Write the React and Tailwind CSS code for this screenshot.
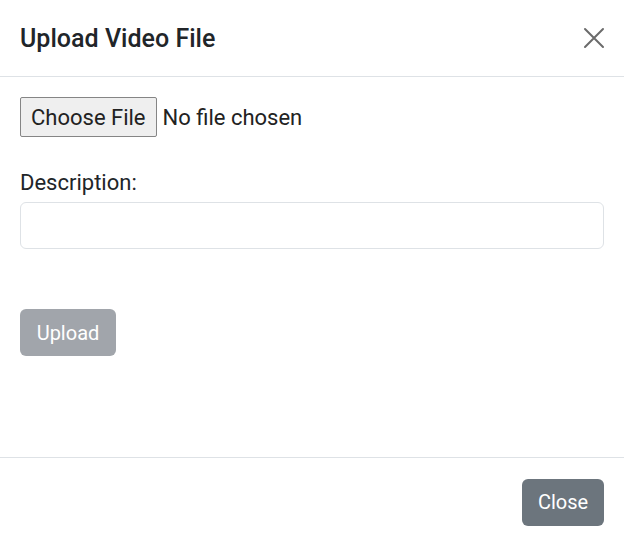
import React from "react";

function CloseIcon() {
  return (
    <svg width="22" height="22" viewBox="0 0 22 22" fill="none">
      <path d="M2 2 L20 20 M20 2 L2 20" stroke="#6b6b6b" strokeWidth="2" strokeLinecap="round" />
    </svg>
  );
}

export default function App() {
  return (
    <div
      className="w-[624px] h-[546px] bg-white flex flex-col text-[#212529]"
      style={{ fontFamily: "Roboto, 'Liberation Sans', sans-serif" }}
    >
      {/* header */}
      <div className="h-[77px] flex items-center justify-between px-5 border-b border-[#dee2e6]">
        <h5
          className="text-[25px] font-medium leading-none"
          style={{ fontFamily: "'Roboto Medium', Roboto, sans-serif" }}
        >
          Upload Video File
        </h5>
        <button className="w-[22px] h-[22px] mr-[-1px] flex items-center justify-center">
          <CloseIcon />
        </button>
      </div>

      {/* body */}
      <div className="flex-1 px-5 pt-5">
        <div className="flex items-center h-[40px]">
          <span className="h-[40px] px-[10px] flex items-center bg-[#efefef] border border-[#858585] rounded-[2px] text-[22px] text-[#222]">
            Choose File
          </span>
          <span className="ml-[6px] text-[22px] text-[#222]">No file chosen</span>
        </div>

        <div className="mt-[33px]">
          <label className="block text-[22px] leading-[26px] mb-[6px]">Description:</label>
          <div className="h-[47px] w-full border border-[#dee2e6] rounded-[6px]" />
        </div>

        <button className="mt-[60px] h-[47px] w-[96px] rounded-[6px] bg-[#a1a5ab] text-white text-[20px] flex items-center justify-center">
          Upload
        </button>
      </div>

      {/* footer */}
      <div className="h-[89px] flex items-center justify-end px-5 border-t border-[#dee2e6]">
        <button className="h-[47px] w-[82px] rounded-[6px] bg-[#6c757d] text-white text-[20px] flex items-center justify-center">
          Close
        </button>
      </div>
    </div>
  );
}
